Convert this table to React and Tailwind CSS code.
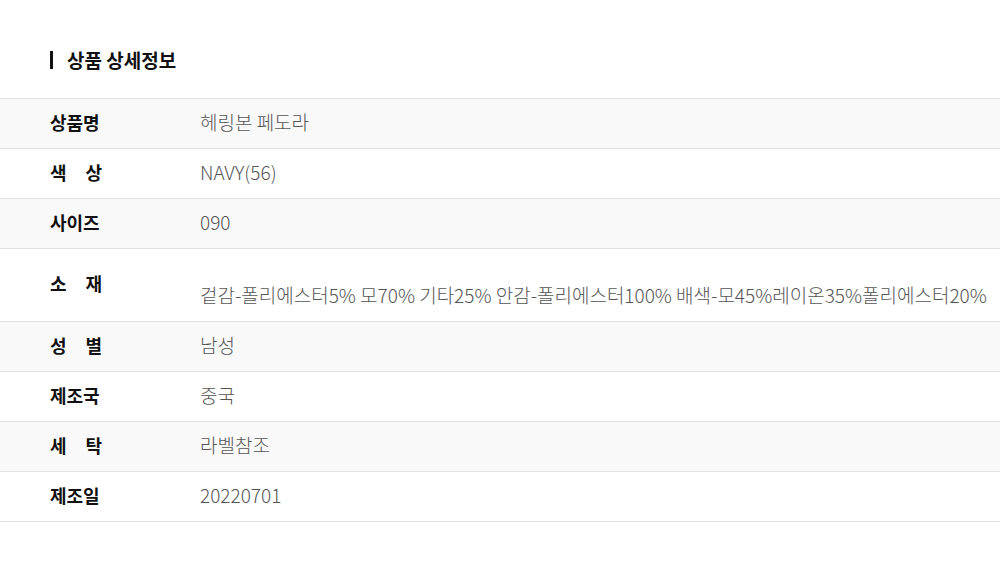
import React from "react";

const rows = [
  { label: ["상품명"], value: "헤링본 페도라", gray: true },
  { label: ["색", "상"], value: "NAVY(56)" },
  { label: ["사이즈"], value: "090", gray: true },
  {
    label: ["소", "재"],
    value: "겉감-폴리에스터5% 모70% 기타25% 안감-폴리에스터100% 배색-모45%레이온35%폴리에스터20%",
    tall: true,
  },
  { label: ["성", "별"], value: "남성", gray: true },
  { label: ["제조국"], value: "중국" },
  { label: ["세", "탁"], value: "라벨참조", gray: true },
  { label: ["제조일"], value: "20220701" },
];

export default function App() {
  return (
    <div
      className="w-[1000px] h-[571px] bg-white overflow-hidden"
      style={{ fontFamily: '"Noto Sans CJK KR", "Noto Sans", sans-serif' }}
    >
      <div className="pt-[50px] pl-[50px] flex items-center h-[70px]">
        <div className="w-[3px] h-[18px] bg-[#111]" />
        <div className="ml-[14px] text-[19px] font-bold text-[#111] leading-[20px]">상품 상세정보</div>
      </div>
      <div className="mt-[28px] border-t border-[#e2e2e2]">
        {rows.map((r, i) => (
          <div
            key={i}
            className={`flex border-b border-[#e2e2e2] ${r.gray ? "bg-[#f9f9f9]" : "bg-white"} ${
              r.tall ? "h-[73px] items-start" : "h-[50px] items-center pb-[4px]"
            }`}
          >
            <div className={`w-[200px] pl-[50px] shrink-0 ${r.tall ? "pt-[22px]" : ""}`}>
              {r.label.length > 1 ? (
                <div className="w-[52px] flex justify-between text-[18px] font-bold text-[#111] leading-[24px]">
                  {r.label.map((c, j) => (
                    <span key={j}>{c}</span>
                  ))}
                </div>
              ) : (
                <div className="text-[18px] font-bold text-[#111] leading-[24px]">{r.label[0]}</div>
              )}
            </div>
            <div
              className={`text-[19px] font-light text-[#555] leading-[24px] whitespace-nowrap ${
                r.tall ? "pt-[34px]" : ""
              }`}
            >
              {r.value}
            </div>
          </div>
        ))}
      </div>
    </div>
  );
}
